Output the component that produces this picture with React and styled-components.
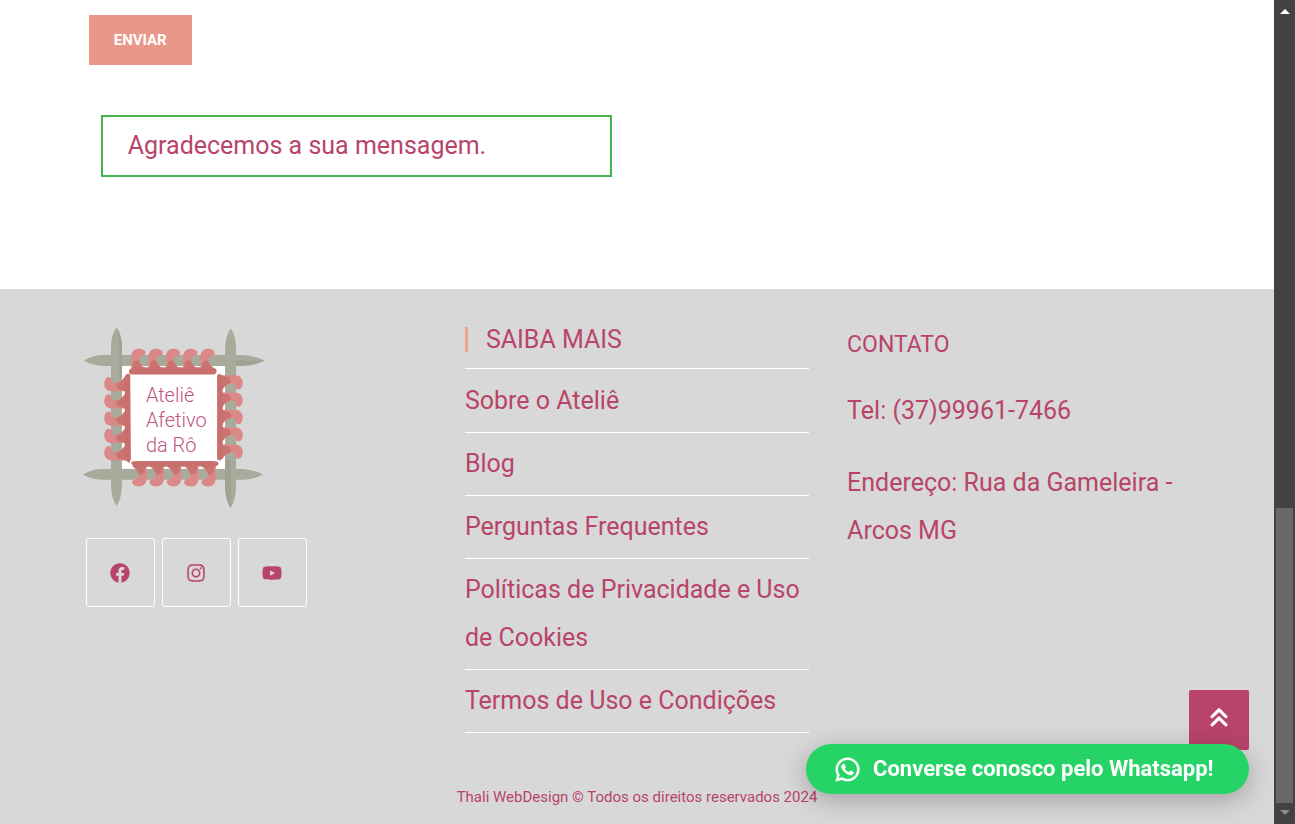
import React from 'react';
import styled, { createGlobalStyle, ThemeProvider } from 'styled-components';
import { FaFacebook, FaInstagram, FaYoutube, FaWhatsapp } from 'react-icons/fa';
import { FaAnglesUp } from 'react-icons/fa6';

const theme = {
  berry: '#b9446a',
  salmon: '#e99788',
  footer: '#d8d8d8',
  green: '#46b450',
  whatsapp: '#25d366',
};

const GlobalStyle = createGlobalStyle`
  *, *::before, *::after { box-sizing: border-box; }
  body {
    margin: 0;
    background: #fff;
    color: ${theme.berry};
    font-family: Roboto, "Liberation Sans", sans-serif;
    font-size: 25px;
    line-height: 48px;
  }
  a { color: inherit; text-decoration: none; }
`;

const Shell = styled.div`
  display: flex;
  min-height: 100vh;
`;

const Page = styled.div`
  flex: 1;
  min-width: 0;
  display: flex;
  flex-direction: column;
`;

const Container = styled.div`
  width: 90%;
  margin: 0 auto;
`;

const FormSection = styled.form`
  width: 50%;
  padding: 15px 25px 112px;
`;

const SubmitButton = styled.button`
  display: block;
  min-width: 103px;
  height: 50px;
  padding: 0 24px;
  border: 0;
  background: ${({ theme }) => theme.salmon};
  color: #fff;
  font-family: inherit;
  font-size: 15px;
  font-weight: 700;
  cursor: pointer;
`;

const SuccessMessage = styled.output`
  display: block;
  margin: 50px 0 0 12px;
  padding: 5px 25px;
  border: 2px solid ${({ theme }) => theme.green};
`;

const Footer = styled.footer`
  flex: 1;
  display: flex;
  flex-direction: column;
  background: ${({ theme }) => theme.footer};
`;

const Columns = styled(Container)`
  display: grid;
  grid-template-columns: repeat(3, 1fr);
  padding: 38px 0 36px;
`;

const Column = styled.section`
  min-width: 0;
  padding: 0 19px;
`;

const Logo = styled.svg`
  display: block;
  width: 183px;
  height: 183px;
`;

const LogoText = styled.text`
  fill: #bf5482;
  font-size: 60px;
  font-weight: 300;
`;

const SocialList = styled.ul`
  display: flex;
  gap: 7px;
  margin: 28px 0 0 3px;
  padding: 0;
  list-style: none;
`;

const SocialLink = styled.a`
  display: flex;
  align-items: center;
  justify-content: center;
  width: 69px;
  height: 69px;
  border: 1px solid #fff;
  border-radius: 3px;

  svg { width: auto; height: 20px; }
`;

const MenuTitle = styled.h2`
  margin: 0 0 16px;
  padding-left: 18px;
  border-left: 3px solid #f0a08e;
  font-size: 25px;
  font-weight: 400;
  line-height: 25px;
`;

const Menu = styled.ul`
  margin: 0;
  padding: 1px 0 0;
  border-top: 1px solid #fff;
  list-style: none;
`;

const MenuItem = styled.li`
  padding: 7px 0;
  border-bottom: 1px solid #fff;
`;

const ContactTitle = styled.h2`
  margin: 0 0 24px;
  font-size: 23px;
  font-weight: 400;
  line-height: 36px;
`;

const ContactLine = styled.p`
  margin: 0 0 24px;
`;

const Credit = styled.p`
  margin: 0;
  padding: 16px 0;
  font-size: 15px;
  line-height: 24px;
  text-align: center;
`;

const BackToTop = styled.a`
  position: fixed;
  right: 46px;
  bottom: 74px;
  display: flex;
  align-items: center;
  justify-content: center;
  width: 60px;
  height: 60px;
  padding-bottom: 4px;
  border-radius: 2px;
  background: ${({ theme }) => theme.berry};
  font-size: 22px;
  && { color: #fff; }

  svg { stroke: currentColor; stroke-width: 14; }
`;

const WhatsappButton = styled.a`
  position: fixed;
  right: 46px;
  bottom: 30px;
  display: flex;
  align-items: center;
  gap: 12px;
  min-width: 443px;
  height: 50px;
  padding: 0 28px;
  border-radius: 25px;
  background: ${({ theme }) => theme.whatsapp};
  box-shadow: 0 6px 26px rgba(0, 0, 0, 0.25);
  font-size: 22px;
  font-weight: 700;
  white-space: nowrap;
  && { color: #fff; }

  svg {
    width: auto;
    height: 27px;
    stroke: currentColor;
    stroke-width: 10;
  }
`;

const Scrollbar = styled.div`
  position: sticky;
  top: 0;
  display: flex;
  flex-direction: column;
  align-items: center;
  justify-content: space-between;
  width: 21px;
  height: 100vh;
  padding: 9px 0;
  background: #424242;
`;

const ScrollArrow = styled.span`
  width: 0;
  height: 0;
  border: 5px solid transparent;
  ${({ $up }) =>
    $up
      ? 'border-top: 0; border-bottom-color: #fff;'
      : 'border-bottom: 0; border-top-color: #8a8a8a;'}
`;

const ScrollThumb = styled.span`
  width: 17px;
  height: 295px;
  margin: auto 0 7px;
  background: #686868;
`;

const stitches = [0, 1, 2, 3, 4];

const Stitch = ({ x, y, turn }) => (
  <g transform={`translate(${x} ${y}) rotate(${turn})`}>
    <path
      d="M-20 58V24C-20 8-10 0 2 0C14 0 23 5 23 13C23 19 18 21 10 23C3 27 2 35 7 43L13 54L22 68H-20Z"
      fill="#db8988"
    />
    <path d="M-16 52L-14 42L-6 36L3 36C5 46 12 53 22 60V68H-22L-18 58Z" fill="#ca7371" />
  </g>
);

const AtelieLogo = () => (
  <Logo viewBox="39 53 550 548" role="img" aria-label="Ateliê Afetivo da Rô">
    <path d="M154 168H468V478H154Z" fill="#fff" />
    <g fill="#a8ab9b">
      <path d="M41 153C62 141 82 136 103 136H520C545 138 568 144 585 153C568 163 545 168 520 169H103C80 169 60 164 41 153Z" />
      <path d="M39 495C58 484 78 479 100 479H520C542 481 562 486 580 495C562 505 542 510 520 511H100C78 511 58 506 39 495Z" />
      <path d="M140 53C151 68 156 88 156 112V530C155 554 150 575 140 591C129 575 124 554 123 530V112C123 88 129 68 140 53Z" />
      <path d="M483 56C494 72 499 92 499 115V535C498 559 493 581 482 597C472 581 467 559 466 535V115C467 92 472 72 483 56Z" />
    </g>
    <g fill="#9fa291">
      <path d="M140 58C152 74 156 92 156 112V206H148V112C148 92 146 76 140 58Z" />
      <path d="M483 450V592C472 575 467 558 466 535V450Z" />
      <path d="M499 153H583C565 163 545 168 499 169Z" />
    </g>
    {stitches.map((i) => (
      <React.Fragment key={i}>
        <Stitch x={204 + i * 52} y={117} turn={0} />
        <Stitch x={519} y={217 + i * 52} turn={90} />
        <Stitch x={210 + i * 52} y={531} turn={180} />
        <Stitch x={103} y={225 + i * 52} turn={-90} />
      </React.Fragment>
    ))}
    <path d="M183 194H440V454H183Z" fill="#fff" />
    <g fill="#c8706e">
      <path d="M180 178L196 173H425L439 178C442 185 440 193 432 195H184C176 193 176 183 180 178Z" />
      <path d="M184 457L198 455H430L444 457C449 463 444 470 436 471L200 472C188 469 183 464 184 457Z" />
      <path d="M165 200C169 192 177 190 181 197L183 450L178 461C170 457 164 448 164 438Z" />
      <path d="M442 198C446 190 455 192 459 204V445C454 455 446 455 442 449Z" />
    </g>
    <LogoText x="228" y="276">Ateliê</LogoText>
    <LogoText x="228" y="352">Afetivo</LogoText>
    <LogoText x="228" y="429">da Rô</LogoText>
  </Logo>
);

const socials = [
  { name: 'Facebook', Icon: FaFacebook },
  { name: 'Instagram', Icon: FaInstagram },
  { name: 'YouTube', Icon: FaYoutube },
];

const links = [
  'Sobre o Ateliê',
  'Blog',
  'Perguntas Frequentes',
  'Políticas de Privacidade e Uso de Cookies',
  'Termos de Uso e Condições',
];

export default function App() {
  return (
    <ThemeProvider theme={theme}>
      <GlobalStyle />
      <Shell>
        <Page>
          <Container>
            <FormSection onSubmit={(event) => event.preventDefault()}>
              <SubmitButton type="submit">ENVIAR</SubmitButton>
              <SuccessMessage>Agradecemos a sua mensagem.</SuccessMessage>
            </FormSection>
          </Container>
          <Footer>
            <Columns>
              <Column>
                <AtelieLogo />
                <SocialList>
                  {socials.map(({ name, Icon }) => (
                    <li key={name}>
                      <SocialLink href="#" aria-label={name}>
                        <Icon />
                      </SocialLink>
                    </li>
                  ))}
                </SocialList>
              </Column>
              <Column>
                <MenuTitle>SAIBA MAIS</MenuTitle>
                <Menu>
                  {links.map((label) => (
                    <MenuItem key={label}>
                      <a href="#">{label}</a>
                    </MenuItem>
                  ))}
                </Menu>
              </Column>
              <Column>
                <ContactTitle>CONTATO</ContactTitle>
                <ContactLine>Tel: (37)99961-7466</ContactLine>
                <ContactLine>Endereço: Rua da Gameleira - Arcos MG</ContactLine>
              </Column>
            </Columns>
            <Credit>Thali WebDesign © Todos os direitos reservados 2024</Credit>
          </Footer>
        </Page>
        <Scrollbar aria-hidden="true">
          <ScrollArrow $up />
          <ScrollThumb />
          <ScrollArrow />
        </Scrollbar>
      </Shell>
      <BackToTop href="#" aria-label="Voltar ao topo">
        <FaAnglesUp />
      </BackToTop>
      <WhatsappButton href="#">
        <FaWhatsapp />
        Converse conosco pelo Whatsapp!
      </WhatsappButton>
    </ThemeProvider>
  );
}
